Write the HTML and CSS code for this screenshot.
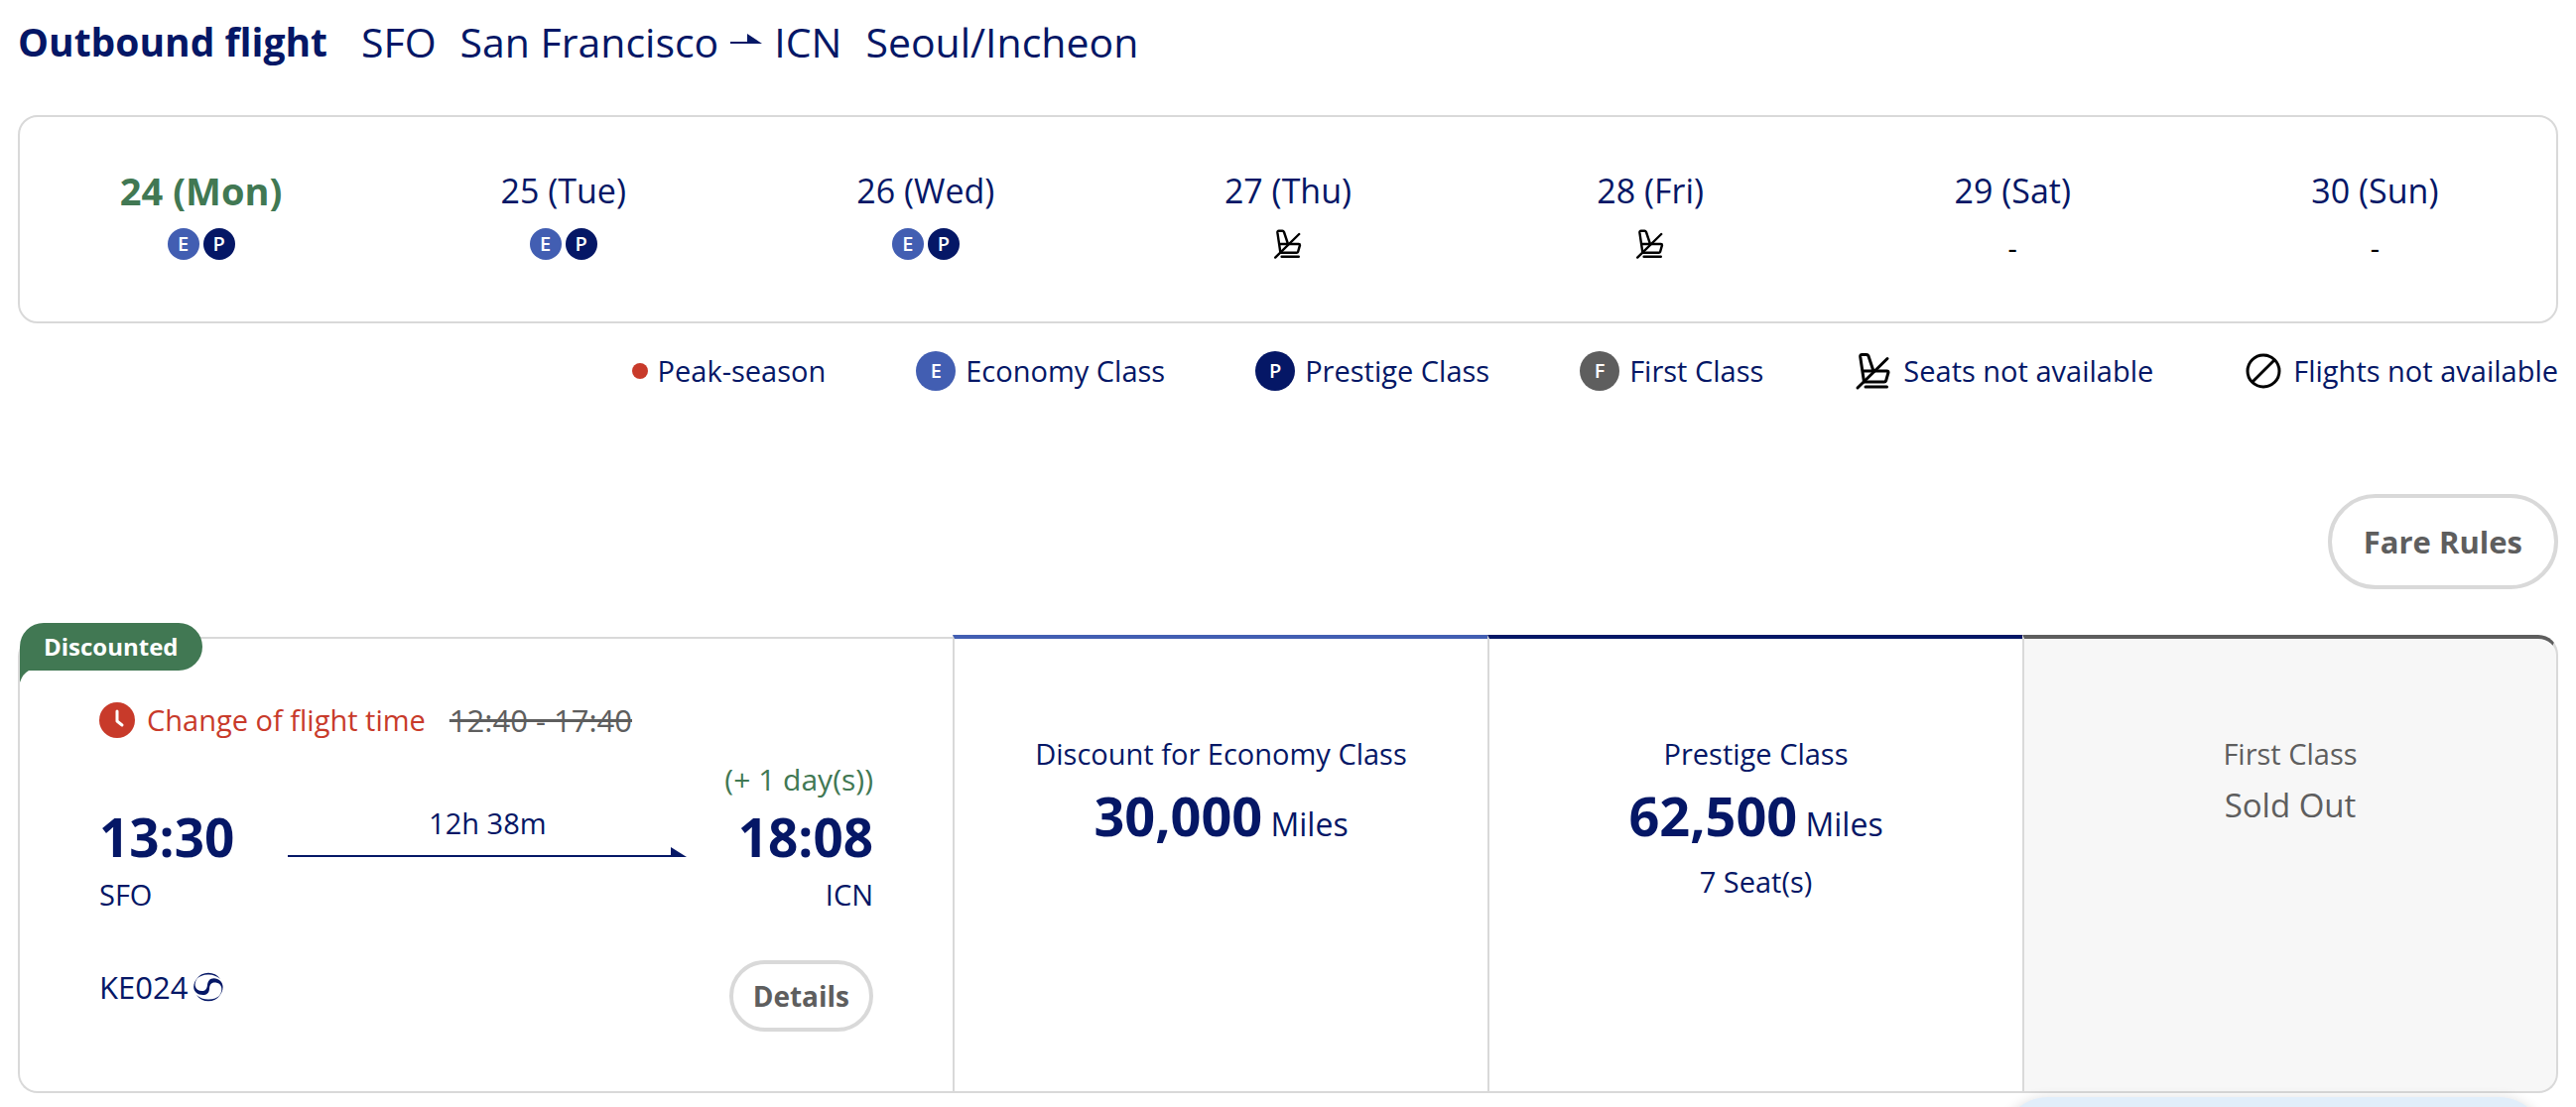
FILE: index.html
```html
<!DOCTYPE html>
<html lang="en">
<head>
    <meta charset="UTF-8">
    <meta name="viewport" content="width=device-width, initial-scale=1.0">
    <title>Outbound flight</title>
    <link rel="stylesheet" href="styles.css">
</head>
<body>
    <!-- shared icons -->
    <svg class="sprite" aria-hidden="true">
        <symbol id="icon-seat" viewBox="0 0 40 40">
            <g fill="none" stroke="#000" stroke-width="3" stroke-linecap="round" stroke-linejoin="round">
                <path d="M20 20 L15 5 Q14.300 3.500 13 3.500 H8.500 Q6.500 3.500 6.700 5.500 L10.500 31 H31 Q32.200 31 32.600 29.800 L35 21.500 Q35 20 33.500 20 H10"/>
                <path d="M12 36 H33.500 M4 37 L34 7.500"/>
            </g>
        </symbol>
    </svg>

    <div class="container">
        <h1>Outbound flight
            <span class="route-name">
                <span>SFO</span>
                <span class="city">San Francisco</span>
                <svg class="to" width="32" height="24" viewBox="0 0 32 24"><path d="M0 12 H17 V4 L32 14 H0 Z" fill="#051766"/></svg>
                <span>ICN</span>
                <span class="city">Seoul/Incheon</span>
            </span>
        </h1>

        <ul class="calendar">
            <li class="selected">
                <span class="day">24 (Mon)</span>
                <span class="seats"><i class="badge economy">E</i><i class="badge prestige">P</i></span>
            </li>
            <li>
                <span class="day">25 (Tue)</span>
                <span class="seats"><i class="badge economy">E</i><i class="badge prestige">P</i></span>
            </li>
            <li>
                <span class="day">26 (Wed)</span>
                <span class="seats"><i class="badge economy">E</i><i class="badge prestige">P</i></span>
            </li>
            <li>
                <span class="day">27 (Thu)</span>
                <span class="seats"><svg width="32" height="32"><use href="#icon-seat"/></svg></span>
            </li>
            <li>
                <span class="day">28 (Fri)</span>
                <span class="seats"><svg width="32" height="32"><use href="#icon-seat"/></svg></span>
            </li>
            <li>
                <span class="day">29 (Sat)</span>
                <span class="seats none">-</span>
            </li>
            <li>
                <span class="day">30 (Sun)</span>
                <span class="seats none">-</span>
            </li>
        </ul>

        <ul class="legend">
            <li><i class="dot"></i>Peak-season</li>
            <li><i class="badge economy">E</i>Economy Class</li>
            <li><i class="badge prestige">P</i>Prestige Class</li>
            <li><i class="badge first">F</i>First Class</li>
            <li><svg width="40" height="40"><use href="#icon-seat"/></svg>Seats not available</li>
            <li>
                <svg width="40" height="40" viewBox="0 0 40 40"><g fill="none" stroke="#000" stroke-width="3"><circle cx="20" cy="20" r="16"/><path d="M8.700 31.300 L31.300 8.700"/></g></svg>
                Flights not available
            </li>
        </ul>

        <div class="actions">
            <button type="button" class="btn btn-large">Fare Rules</button>
        </div>

        <div class="card">
            <div class="flight">
                <span class="discounted">Discounted
                    <svg width="9" height="12" viewBox="0 0 9 12"><path d="M0 0 H9 Q3 3 0 12 Z" fill="#417853"/></svg>
                </span>

                <div class="change">
                    <svg width="36" height="36" viewBox="0 0 36 36"><circle cx="18" cy="18" r="18" fill="#c83a2a"/><path d="M18 9 V19 L23 23" fill="none" stroke="#fff" stroke-width="3" stroke-linecap="round" stroke-linejoin="round"/></svg>
                    <span>Change of flight time</span>
                    <del>12:40 - 17:40</del>
                </div>

                <div class="route">
                    <div class="from">
                        <strong class="time">13:30</strong>
                        <span>SFO</span>
                    </div>
                    <div class="duration">
                        <span>12h 38m</span>
                        <div class="arrow">
                            <i></i><svg width="16" height="10" viewBox="0 0 16 10"><path d="M0 0 L16 10 H0 Z" fill="#051766"/></svg>
                        </div>
                    </div>
                    <div class="arrive">
                        <span class="plus">(+ 1 day(s))</span>
                        <strong class="time">18:08</strong>
                        <span>ICN</span>
                    </div>
                </div>

                <div class="bottom">
                    <span class="number">KE024
                        <svg width="30" height="30" viewBox="0 0 30 30" fill="#051766">
                            <path d="M3 7 A14.500 14.500 0 0 1 27 7 Q21.500 2.300 15 2.500 Q8 2.300 3 7 Z"/>
                            <path d="M27 23 A14.500 14.500 0 0 1 3 23 Q8.500 27.700 15 27.500 Q22 27.700 27 23 Z"/>
                            <path d="M4.500 5.500 Q1 10 1.700 14 C2.500 17.500 5 19 8.500 19 C12 19 13.500 17 13.900 13.500 C14.400 9 16.500 6.200 20.500 6.200 C25.500 6.200 29.600 10 29.600 15 C29.600 19 28 22 25.500 24.500 Q28.800 20 28.300 16.500 C28 12.500 25 10.500 21.500 10.500 C17.500 10.500 16.300 13 16 17 C15.600 21 13.500 23 9.500 23 C4 23 0.200 19.500 0.200 15 C0.200 11.500 1.500 8.500 4.500 5.500 Z"/>
                        </svg>
                    </span>
                    <button type="button" class="btn">Details</button>
                </div>
            </div>

            <div class="fare fare-economy">
                <span class="name">Discount for Economy Class</span>
                <span class="price"><strong>30,000</strong> Miles</span>
            </div>
            <div class="fare fare-prestige">
                <span class="name">Prestige Class</span>
                <span class="price"><strong>62,500</strong> Miles</span>
                <span class="left">7 Seat(s)</span>
            </div>
            <div class="fare fare-first">
                <span class="name">First Class</span>
                <span class="sold-out">Sold Out</span>
            </div>
        </div>
    </div>

    <div class="floating"></div>
</body>
</html>
```
FILE: styles.css
```css
* {
    box-sizing: border-box;
}

body {
    margin: 0;
    font-family: "Open Sans", "Noto Sans", sans-serif;
    font-size: 29px;
    line-height: 40px;
    color: #051766;
    background-color: #fff;
}

.sprite {
    display: none;
}

.container {
    padding: 14px 18px 0;
}

h1 {
    display: flex;
    align-items: center;
    margin: 0 0 46px;
    font-size: 39px;
    line-height: 56px;
}

.route-name {
    display: flex;
    align-items: center;
    margin-left: 34px;
    font-size: 41px;
    font-weight: normal;
}

.route-name .city {
    margin-left: 24px;
}

.route-name .to {
    margin: 0 12px;
}

ul {
    display: flex;
    list-style: none;
    margin: 0;
    padding: 0;
}

.calendar {
    padding: 50px 0 62px;
    border: 2px solid #d9d9d9;
    border-radius: 20px;
}

.calendar li {
    flex: 1;
    display: flex;
    flex-direction: column;
    align-items: center;
    gap: 14px;
}

.day {
    font-size: 34px;
    line-height: 48px;
}

.selected .day {
    font-size: 38px;
    font-weight: bold;
    color: #417853;
}

.seats {
    display: flex;
    gap: 4px;
    height: 32px;
}

.seats.none {
    line-height: 40px;
    color: #000;
}

.badge {
    display: flex;
    align-items: center;
    justify-content: center;
    width: 32px;
    height: 32px;
    border-radius: 50%;
    font-size: 20px;
    font-style: normal;
    font-weight: 600;
    color: #fff;
}

.economy {
    background-color: #425eb2;
}

.prestige {
    background-color: #051766;
}

.first {
    background-color: #5e5e5e;
}

.legend {
    justify-content: flex-end;
    gap: 91px;
    margin-top: 28px;
}

.legend li {
    display: flex;
    align-items: center;
    gap: 10px;
}

.legend .badge {
    width: 40px;
    height: 40px;
}

.dot {
    width: 16px;
    height: 16px;
    border-radius: 50%;
    background-color: #c83a2a;
}

.actions {
    display: flex;
    justify-content: flex-end;
    margin: 104px 0 46px;
}

.btn {
    height: 72px;
    padding: 0 20px;
    border: 4px solid #d9d9d9;
    border-radius: 48px;
    background-color: #fff;
    color: #5e5e5e;
    font-family: inherit;
    font-size: 28px;
    font-weight: bold;
    cursor: pointer;
}

.btn-large {
    height: 96px;
    padding: 0 32px;
    font-size: 31px;
}

.card {
    display: grid;
    grid-template-columns: 942fr 539fr 539fr 540fr;
}

.flight {
    position: relative;
    margin-top: 2px;
    padding: 64px 80px 60px;
    border: 2px solid #d9d9d9;
    border-right: none;
    border-radius: 20px 0 0 20px;
}

.discounted {
    position: absolute;
    top: -16px;
    left: 0;
    padding: 0 24px;
    border-radius: 24px 24px 24px 0;
    background-color: #417853;
    color: #fff;
    font-size: 24px;
    font-weight: bold;
    line-height: 48px;
}

.discounted svg {
    position: absolute;
    top: 100%;
    left: 0;
}

.change {
    display: flex;
    align-items: center;
    height: 36px;
    color: #c83a2a;
}

.change span {
    margin: 0 24px 0 12px;
}

.change del {
    color: #5e5e5e;
    font-size: 31px;
}

.route {
    display: flex;
    align-items: flex-end;
    margin-top: 22px;
}

.from,
.arrive {
    display: flex;
    flex-direction: column;
    gap: 8px;
}

.arrive {
    align-items: flex-end;
}

.time {
    font-size: 53px;
    line-height: 60px;
}

.plus {
    color: #417853;
    font-size: 30px;
}

.duration {
    flex: 1;
    margin: 0 38px 58px 54px;
    text-align: center;
}

.arrow {
    display: flex;
    align-items: flex-end;
    margin-top: 4px;
}

.arrow i {
    flex: 1;
    height: 2px;
    background-color: #051766;
}

.bottom {
    display: flex;
    justify-content: space-between;
    margin-top: 46px;
}

.number {
    display: flex;
    align-items: center;
    gap: 6px;
    height: 54px;
    font-size: 31px;
}

.fare {
    display: flex;
    flex-direction: column;
    align-items: center;
    padding-top: 96px;
    border: 2px solid #d9d9d9;
    border-right: none;
    border-top-width: 4px;
}

.fare-economy {
    border-top-color: #425eb2;
}

.fare-prestige {
    border-top-color: #051766;
}

.fare-first {
    border-right: 2px solid #d9d9d9;
    border-top-color: #5e5e5e;
    border-radius: 0 20px 20px 0;
    background-color: #f7f7f7;
    color: #5e5e5e;
}

.price {
    margin-top: 12px;
    font-size: 32px;
    line-height: 60px;
}

.price strong {
    font-size: 54px;
}

.left {
    margin-top: 8px;
}

.sold-out {
    margin-top: 12px;
    font-size: 33px;
}

.floating {
    position: fixed;
    right: 30px;
    bottom: -86px;
    width: 550px;
    height: 96px;
    border-radius: 48px;
    background-color: #e1eefa;
    box-shadow: 0 0 12px rgba(0, 0, 0, 0.12);
}
```
